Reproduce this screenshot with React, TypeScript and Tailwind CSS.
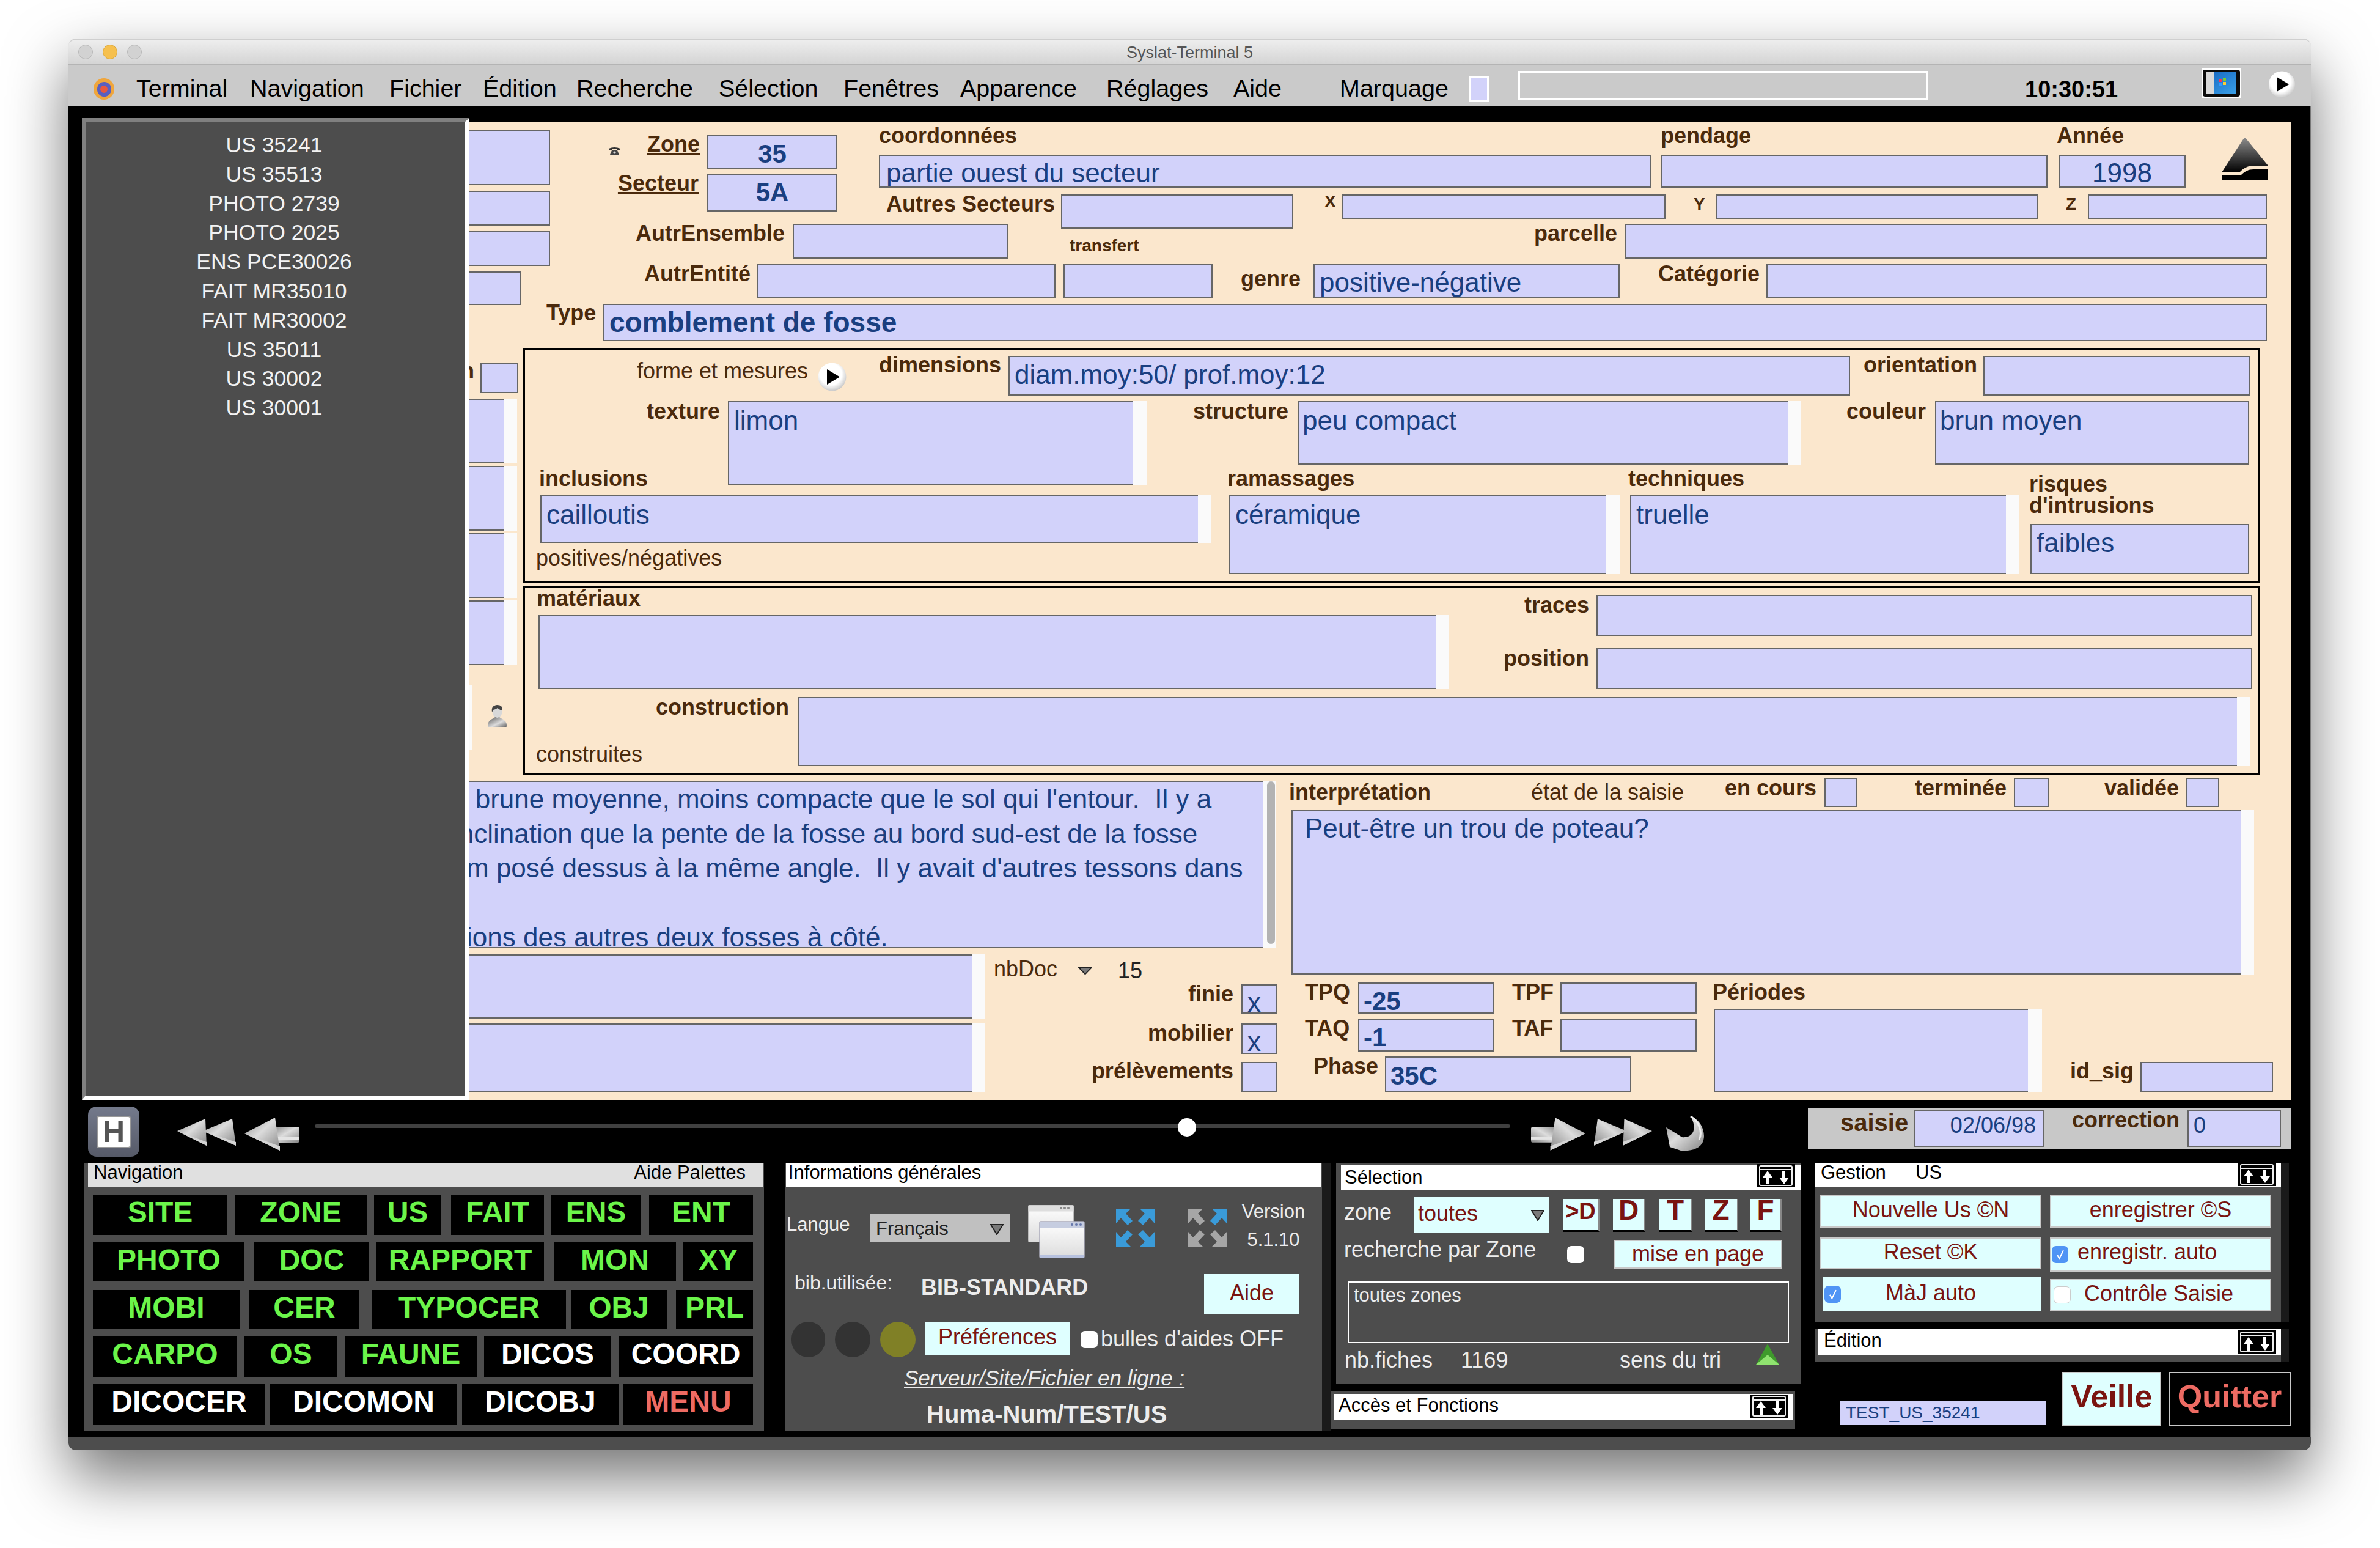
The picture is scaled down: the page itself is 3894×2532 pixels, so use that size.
import React from 'react';
import { twMerge } from 'tailwind-merge';

type Props = { className?: string; children?: React.ReactNode };

const Fld = ({ className, children }: Props) => (
  <div className={twMerge('shrink-0 overflow-hidden whitespace-pre border-2 border-[#666] bg-[#d2d2fa] pl-[8px] pt-[3px] text-[44px] leading-[50px] text-[#1a3f80]', className)}>
    {children}
  </div>
);

// field with the pale scroll track on its right
const Scroll = ({ className, field, track = 'w-[22px]', children }: Props & { field: string; track?: string }) => (
  <div className={twMerge('flex shrink-0', className)}>
    <Fld className={twMerge('h-full border-r-0 pt-[5px]', field)}>{children}</Fld>
    <div className={`${track} h-full shrink-0 bg-[#fafafa]`} />
  </div>
);

const Lbl = ({ className, children }: Props) => (
  <div className={twMerge('-mb-[2px] -mt-[6px] shrink-0 whitespace-nowrap pt-[2px] text-[36px] font-bold leading-[40px] text-[#4b2a0c]', className)}>{children}</div>
);

const Reg = ({ className, children }: Props) => (
  <div className={twMerge('-mb-[2px] shrink-0 whitespace-nowrap pt-[2px] text-[36px] leading-[40px] text-[#4b2a0c]', className)}>{children}</div>
);

const Play = ({ className }: Props) => (
  <svg viewBox="0 0 47 47" className={className}>
    <defs>
      <radialGradient id="pl" cx="0.45" cy="0.4" r="0.65">
        <stop offset="0.6" stopColor="#fff" />
        <stop offset="1" stopColor="#bdbdbd" />
      </radialGradient>
    </defs>
    <circle cx="23.5" cy="23.5" r="23" fill="url(#pl)" />
    <polygon points="15,11 36,23.5 15,36" fill="#000" />
  </svg>
);

const Eject = () => (
  <svg viewBox="0 0 76 70" className="-mt-[28px] ml-[59px] h-[70px] w-[76px] shrink-0">
    <defs>
      <linearGradient id="ej" x1="0" y1="0" x2="0" y2="1">
        <stop offset="0" stopColor="#8c8c8c" />
        <stop offset="1" stopColor="#000" />
      </linearGradient>
    </defs>
    <path d="M35 3 Q38 -2 41 3 L76 46 H52 C42 46 36 50 29 57 H0 Z" fill="url(#ej)" />
    <path d="M0 62 H31 C38 55 44 52 52 52 H76 V66 Q76 70 72 70 H4 Q0 70 0 66 Z" fill="#000" />
  </svg>
);

const Phone = () => (
  <svg viewBox="0 0 21 14" className="ml-[95px] mt-[26px] h-[14px] w-[21px] shrink-0">
    <path d="M1 3 Q10 -1 20 3 L19 6 H15 V4 H6 V6 H2 Z" fill="#333" />
    <path d="M6 6 H15 L18 13 H3 Z" fill="#444" />
    <circle cx="10.5" cy="9.5" r="2" fill="#ddd" />
  </svg>
);

const Person = () => (
  <svg viewBox="0 0 33 37" className="ml-[25px] mt-[33px] h-[37px] w-[33px] shrink-0">
    <defs>
      <linearGradient id="pb" x1="0" y1="0" x2="1" y2="1">
        <stop offset="0" stopColor="#555" />
        <stop offset="0.6" stopColor="#ddd" />
        <stop offset="1" stopColor="#666" />
      </linearGradient>
    </defs>
    <path d="M1 35 Q0 26 10 22 L13 20 H20 L23 22 Q33 26 32 35 Q32 36 31 36 H2 Q1 36 1 35 Z" fill="url(#pb)" />
    <ellipse cx="16.5" cy="11" rx="8" ry="10" fill="#d8d8d8" />
    <path d="M8 12 Q6 1 16 0 Q26 0 25 9 Q20 8 17 5 Q13 8 10 8 Z" fill="#444" />
  </svg>
);

const Tablet = () => (
  <svg viewBox="0 0 63 48" className="ml-[134px] mt-[5px] h-[48px] w-[63px] shrink-0">
    <rect width="63" height="48" fill="#fff" />
    <rect x="1" y="2" width="61" height="44" rx="4" fill="#0b0b0b" />
    <defs>
      <linearGradient id="sc" x1="0" y1="0" x2="1" y2="1">
        <stop offset="0" stopColor="#1565c0" />
        <stop offset="1" stopColor="#3aa0e8" />
      </linearGradient>
    </defs>
    <rect x="6" y="6" width="50" height="35" fill="url(#sc)" />
    <rect x="6" y="6" width="14" height="35" fill="#d9d9d9" />
    <rect x="28" y="17" width="5" height="5" fill="#f35" />
    <rect x="34" y="16" width="5" height="5" fill="#7c3" />
    <rect x="28" y="23" width="5" height="5" fill="#39f" />
    <rect x="34" y="22" width="5" height="5" fill="#fc3" />
  </svg>
);

const Tri = ({ className }: Props) => (
  <svg viewBox="0 0 22 20" preserveAspectRatio="none" className={className}>
    <polygon points="1,1 21,1 11,19" fill="#7a7a7a" stroke="#222" strokeWidth="2" />
  </svg>
);

const Left = ({ className, flip }: Props & { flip?: boolean }) => (
  <svg viewBox="0 0 90 54" className={className}>
    <defs>
      <linearGradient id="a1" x1="0" y1="0" x2="1" y2="1">
        <stop offset="0" stopColor="#8a8a8a" />
        <stop offset="0.45" stopColor="#dcdcdc" />
        <stop offset="1" stopColor="#858585" />
      </linearGradient>
    </defs>
    <g transform={flip ? 'translate(90,0) scale(-1,1)' : undefined}>
      <rect x="48" y="15" width="42" height="26" rx="3" fill="url(#a1)" />
      <rect x="48" y="32" width="42" height="4" fill="#e4e4e4" />
      <polygon points="0,26 50,0 58,54" fill="url(#a1)" />
      <polygon points="0,26 58,47 58,54" fill="#d4d4d4" />
    </g>
  </svg>
);

const DoubleLeft = ({ className, flip }: Props & { flip?: boolean }) => (
  <svg viewBox="0 0 96 44" className={className}>
    <g transform={flip ? 'translate(96,0) scale(-1,1)' : undefined}>
      <polygon points="0,20 46,0 48,44" fill="url(#a1)" />
      <polygon points="0,20 48,38 48,44" fill="#d4d4d4" />
      <polygon points="42,20 90,0 96,44" fill="url(#a1)" />
      <polygon points="42,20 96,38 96,44" fill="#d4d4d4" />
    </g>
  </svg>
);

const Back = ({ className }: Props) => (
  <svg viewBox="0 0 63 58" className={className}>
    <path d="M40 0 C58 6 66 28 60 42 C56 52 40 58 24 56 L6 50 L0 18 L26 34 C44 36 52 20 40 0 Z" fill="url(#a1)" />
    <path d="M40 0 C54 8 60 26 54 38" fill="none" stroke="#efefef" strokeWidth="3" />
  </svg>
);

const ArrowsOut = ({ colors, className }: Props & { colors: string[] }) => {
  const pts = '0,0 24,0 16,8 27,20 19,27 8,15 0,24';
  return (
    <svg viewBox="0 0 63 62" className={className}>
      <polygon points={pts} fill={colors[0]} />
      <polygon points={pts} fill={colors[1]} transform="translate(63,0) scale(-1,1)" />
      <polygon points={pts} fill={colors[2]} transform="translate(0,62) scale(1,-1)" />
      <polygon points={pts} fill={colors[3]} transform="translate(63,62) scale(-1,-1)" />
    </svg>
  );
};

const Windows = ({ className }: Props) => (
  <svg viewBox="0 0 93 88" className={className}>
    <defs>
      <linearGradient id="wb" x1="0" y1="0" x2="0" y2="1">
        <stop offset="0" stopColor="#fff" />
        <stop offset="1" stopColor="#dcdcdc" />
      </linearGradient>
    </defs>
    <rect x="0.5" y="0.5" width="74" height="60" rx="2" fill="url(#wb)" stroke="#bbb" />
    <rect x="0.5" y="0.5" width="74" height="10" fill="#dedede" />
    <circle cx="54" cy="5" r="2" fill="#888" /><circle cx="60" cy="5" r="2" fill="#888" /><circle cx="66" cy="5" r="2" fill="#888" />
    <rect x="19" y="27" width="73" height="59" rx="2" fill="url(#wb)" stroke="#aab" strokeWidth="1.5" />
    <rect x="19" y="27" width="73" height="11" fill="#c6cde0" />
    <circle cx="72" cy="32" r="2" fill="#67a" /><circle cx="79" cy="32" r="2" fill="#67a" /><circle cx="86" cy="32" r="2" fill="#67a" />
    <rect x="20" y="82" width="71" height="4" fill="#b7c1de" />
  </svg>
);

const Sort = () => (
  <svg viewBox="0 0 63 38" className="h-[38px] w-[63px] shrink-0">
    <rect width="63" height="38" fill="#000" />
    <rect x="5" y="3" width="53" height="32" rx="2" fill="#000" stroke="#eee" strokeWidth="2" />
    <rect x="5" y="8" width="53" height="2" fill="#eee" />
    <polygon points="18,11 26,22 21,22 21,33 16,33 16,22 10,22" fill="#fff" />
    <polygon points="45,33 37,22 42,22 42,11 47,11 47,22 53,22" fill="#fff" />
  </svg>
);

const Check = ({ className, on }: Props & { on?: boolean }) => (
  <div className={twMerge('flex shrink-0 items-center justify-center rounded-[7px]', on ? 'bg-[#4f94f5]' : 'border border-[#ccc] bg-white', className)}>
    {on && (
      <svg viewBox="0 0 24 24" className="h-[20px] w-[20px]">
        <path d="M6 13 L10 20 L18 4" fill="none" stroke="#fff" strokeWidth="2.5" />
      </svg>
    )}
  </div>
);

const navRows = [
  { row: 'mt-[12px]', items: [
    { t: 'SITE', c: 'w-[220px]' }, { t: 'ZONE', c: 'ml-[12px] w-[216px]' }, { t: 'US', c: 'ml-[12px] w-[110px]' },
    { t: 'FAIT', c: 'ml-[16px] w-[152px]' }, { t: 'ENS', c: 'ml-[12px] w-[146px]' }, { t: 'ENT', c: 'ml-[14px] w-[170px]' },
  ] },
  { row: 'mt-[12px] h-[64px]', items: [
    { t: 'PHOTO', c: 'w-[248px]' }, { t: 'DOC', c: 'ml-[16px] w-[188px]' }, { t: 'RAPPORT', c: 'ml-[12px] w-[274px]' },
    { t: 'MON', c: 'ml-[16px] w-[200px]' }, { t: 'XY', c: 'ml-[12px] w-[114px]' },
  ] },
  { row: 'mt-[14px] h-[64px]', items: [
    { t: 'MOBI', c: 'w-[240px]' }, { t: 'CER', c: 'ml-[16px] w-[180px]' }, { t: 'TYPOCER', c: 'ml-[20px] w-[318px]' },
    { t: 'OBJ', c: 'ml-[8px] w-[157px]' }, { t: 'PRL', c: 'ml-[15px] w-[126px]' },
  ] },
  { row: 'mt-[12px]', items: [
    { t: 'CARPO', c: 'w-[236px]' }, { t: 'OS', c: 'ml-[12px] w-[152px]' }, { t: 'FAUNE', c: 'ml-[12px] w-[216px]' },
    { t: 'DICOS', c: 'ml-[12px] w-[208px] text-white' }, { t: 'COORD', c: 'ml-[12px] w-[220px] text-white' },
  ] },
  { row: 'mt-[12px]', items: [
    { t: 'DICOCER', c: 'w-[282px] text-white' }, { t: 'DICOMON', c: 'ml-[8px] w-[306px] text-white' },
    { t: 'DICOBJ', c: 'ml-[8px] w-[256px] text-white' }, { t: 'MENU', c: 'ml-[8px] w-[212px] text-[#ee6b63]' },
  ] },
];

const menu = [
  { t: 'Terminal', c: 'w-[186px]' }, { t: 'Navigation', c: 'w-[228px]' }, { t: 'Fichier', c: 'w-[153px]' },
  { t: 'Édition', c: 'w-[153px]' }, { t: 'Recherche', c: 'w-[233px]' }, { t: 'Sélection', c: 'w-[204px]' },
  { t: 'Fenêtres', c: 'w-[191px]' }, { t: 'Apparence', c: 'w-[239px]' }, { t: 'Réglages', c: 'w-[208px]' },
  { t: 'Aide', c: 'w-[174px]' }, { t: 'Marquage', c: 'w-[211px]' },
];

const list = ['US 35241', 'US 35513', 'PHOTO 2739', 'PHOTO 2025', 'ENS PCE30026', 'FAIT MR35010', 'FAIT MR30002', 'US 35011', 'US 30002', 'US 30001'];

const Blue = ({ className, children }: Props) => (
  <div className={twMerge('shrink-0 border-2 border-[#c8c8c8] bg-[#dfffff] text-[36px] leading-[40px] text-[#7a1410]', className)}>{children}</div>
);

function TopForm() {
  return (
    <div className="flex h-[364px] shrink-0">
      <div className="flex w-[132px] shrink-0 flex-col gap-[9px] pt-[12px]">
        <Fld className="h-[91px] w-[132px] border-l-0" />
        <Fld className="h-[57px] w-[132px] border-l-0" />
        <Fld className="h-[57px] w-[132px] border-l-0" />
        <Fld className="h-[55px] w-[84px] border-l-0" />
      </div>
      <div className="flex w-[2809px] shrink-0 flex-col">
        <div className="flex h-[166px] shrink-0">
          <div className="w-[470px] shrink-0 pt-[14px]">
            <div className="flex items-start">
              <Phone />
              <Lbl className="mt-0 w-[129px] text-right underline">Zone</Lbl>
              <Fld className="ml-[12px] mt-[6px] h-[56px] w-[213px] pl-0 pt-[5px] text-center text-[42px] font-bold leading-[50px]">35</Fld>
            </div>
            <div className="mt-[2px] flex items-start">
              <Lbl className="mt-0 w-[243px] text-right underline">Secteur</Lbl>
              <Fld className="ml-[14px] mt-[7px] h-[61px] w-[213px] pl-0 pt-[3px] text-center text-[42px] font-bold leading-[50px]">5A</Fld>
            </div>
          </div>
          <div className="ml-[68px] w-[2271px] shrink-0">
            <div className="flex h-[53px] pt-[2px]">
              <Lbl className="mt-0 w-[1279px] pt-0">coordonnées</Lbl>
              <Lbl className="mt-0 w-[648px] pt-0">pendage</Lbl>
              <Lbl className="mt-0 pt-0">Année</Lbl>
            </div>
            <div className="flex h-[54px] items-start">
              <Fld className="h-[54px] w-[1264px] pl-[10px]">partie ouest du secteur</Fld>
              <Fld className="ml-[16px] h-[54px] w-[632px]" />
              <Fld className="ml-[18px] h-[54px] w-[208px] pl-0 text-center">1998</Fld>
              <Eject />
            </div>
            <div className="mt-[11px] flex items-start">
              <Lbl className="ml-[12px] w-[273px]">Autres Secteurs</Lbl>
              <Fld className="ml-[13px] h-[56px] w-[380px]" />
              <Lbl className="-mt-[4px] ml-[51px] w-[17px] pt-0 text-[28px] leading-[32px]">X</Lbl>
              <Fld className="ml-[12px] h-[40px] w-[529px]" />
              <Lbl className="ml-[46px] mt-0 w-[17px] pt-0 text-[28px] leading-[32px]">Y</Lbl>
              <Fld className="ml-[20px] h-[40px] w-[526px]" />
              <Lbl className="ml-[46px] mt-0 w-[17px] pt-0 text-[28px] leading-[32px]">Z</Lbl>
              <Fld className="ml-[19px] h-[40px] w-[293px]" />
            </div>
          </div>
        </div>
        <div className="flex h-[57px] shrink-0 items-start">
          <Lbl className="w-[384px] text-right">AutrEnsemble</Lbl>
          <Fld className="ml-[13px] h-[57px] w-[353px]" />
          <Lbl className="ml-[100px] mt-[20px] w-[113px] pt-0 text-[28px] leading-[32px]">transfert</Lbl>
          <Lbl className="w-[783px] text-right">parcelle</Lbl>
          <Fld className="ml-[13px] h-[57px] w-[1050px]" />
        </div>
        <div className="mt-[9px] flex h-[55px] shrink-0 items-start">
          <Lbl className="w-[328px] text-right">AutrEntité</Lbl>
          <Fld className="ml-[10px] h-[55px] w-[489px]" />
          <Fld className="ml-[13px] h-[55px] w-[244px]" />
          <Lbl className="mt-[2px] w-[144px] text-right">genre</Lbl>
          <Fld className="ml-[21px] h-[55px] w-[501px]">positive-négative</Fld>
          <Lbl className="ml-[63px] w-[164px]">Catégorie</Lbl>
          <Fld className="ml-[13px] h-[55px] w-[819px]" />
        </div>
        <div className="mt-[10px] flex h-[61px] shrink-0 items-start">
          <Lbl className="-ml-[6px] -mt-[7px] w-[81px]">Type</Lbl>
          <Fld className="ml-[12px] h-[61px] w-[2722px] pt-[3px] text-[46px] font-bold leading-[50px]">comblement de fosse</Fld>
        </div>
      </div>
    </div>
  );
}

function MidForm() {
  return (
    <div className="flex h-[708px] shrink-0">
      <div className="w-[88px] shrink-0 pt-[30px]">
        <div className="flex h-[49px] items-start">
          <div className="-mt-[7px] flex w-[8px] shrink-0 justify-end overflow-hidden text-[36px] font-bold leading-[40px] text-[#4b2a0c]">n</div>
          <Fld className="ml-[10px] h-[49px] w-[62px]" />
        </div>
        <div className="mt-[9px] flex flex-col gap-[4px]">
          <Scroll className="h-[106px]" field="w-[56px] border-l-0" />
          <Scroll className="h-[106px]" field="w-[56px] border-l-0" />
          <Scroll className="h-[106px]" field="w-[56px] border-l-0" />
          <Scroll className="h-[106px]" field="w-[56px] border-l-0" />
        </div>
        <div className="mt-[32px] flex items-start">
          <div className="h-[106px] w-[4px] shrink-0 bg-[#fafafa]" />
          <Person />
        </div>
      </div>
      <div className="flex flex-col pt-[6px]">
        {/* forme et mesures */}
        <div className="h-[383px] w-[2842px] shrink-0 border-[3px] border-black">
          <div className="mt-[9px] flex h-[65px] items-start">
            <Reg className="ml-[183px] mt-[3px] w-[280px]">forme et mesures</Reg>
            <Play className="ml-[16px] mt-[11px] h-[47px] w-[47px] shrink-0" />
            <Lbl className="-mt-[7px] ml-[53px] w-[199px]">dimensions</Lbl>
            <Fld className="ml-[13px] h-[65px] w-[1377px] pt-[4px]">diam.moy:50/ prof.moy:12</Fld>
            <Lbl className="-mt-[7px] ml-[22px] w-[184px]">orientation</Lbl>
            <Fld className="ml-[12px] h-[65px] w-[437px]" />
          </div>
          <div className="mt-[9px] flex h-[112px] items-start">
            <Lbl className="-mt-[5px] w-[319px] text-right">texture</Lbl>
            <Scroll className="ml-[13px] h-[137px]" field="w-[663px]">limon</Scroll>
            <Lbl className="-mt-[5px] w-[232px] text-right">structure</Lbl>
            <Scroll className="ml-[15px] h-[104px]" field="w-[802px] pl-[6px]">peu compact</Scroll>
            <Lbl className="-mt-[5px] w-[204px] text-right">couleur</Lbl>
            <Fld className="ml-[15px] h-[104px] w-[514px] pl-[6px] pt-[5px]">brun moyen</Fld>
          </div>
          <div className="flex items-start">
            <div className="ml-[25px] w-[1098px] shrink-0">
              <Lbl className="-ml-[2px] -mt-[7px]">inclusions</Lbl>
              <Scroll className="mt-[9px] h-[78px]" field="w-[1076px]">cailloutis</Scroll>
              <Reg className="-ml-[7px] mt-[3px]">positives/négatives</Reg>
            </div>
            <div className="ml-[29px] w-[639px] shrink-0">
              <Lbl className="-ml-[3px] -mt-[7px]">ramassages</Lbl>
              <Scroll className="mt-[9px] h-[129px]" field="w-[616px]" track="w-[23px]">céramique</Scroll>
            </div>
            <div className="ml-[17px] w-[636px] shrink-0">
              <Lbl className="-ml-[3px] -mt-[7px]">techniques</Lbl>
              <Scroll className="mt-[9px] h-[129px]" field="w-[615px]" track="w-[21px]">truelle</Scroll>
            </div>
            <div className="ml-[19px] w-[358px] shrink-0">
              <Lbl className="-ml-[2px] mb-0 mt-[6px] pt-0 leading-[35px]">risques<br />d'intrusions</Lbl>
              <Fld className="mt-[13px] h-[82px] w-[358px] pt-[4px]">faibles</Fld>
            </div>
          </div>
        </div>
        {/* matériaux */}
        <div className="mt-[6px] h-[308px] w-[2842px] shrink-0 border-[3px] border-black">
          <div className="flex h-[165px] items-start">
            <div className="w-[1512px] shrink-0 pl-[22px]">
              <Lbl className="-ml-[3px] -mt-[5px]">matériaux</Lbl>
              <Scroll className="mt-[9px] h-[121px]" field="w-[1468px]">{null}</Scroll>
            </div>
            <div className="pt-[11px]">
              <div className="flex items-start">
                <Lbl className="-mt-[5px] w-[229px] text-right">traces</Lbl>
                <Fld className="ml-[12px] h-[67px] w-[1073px]" />
              </div>
              <div className="mt-[20px] flex items-start">
                <Lbl className="-mt-[5px] w-[229px] text-right">position</Lbl>
                <Fld className="ml-[12px] h-[67px] w-[1073px]" />
              </div>
            </div>
          </div>
          <div className="mt-[13px] flex h-[113px] items-start">
            <div className="flex h-[113px] w-[446px] shrink-0 flex-col justify-between pb-[1px]">
              <Lbl className="-mt-[5px] pr-[14px] text-right">construction</Lbl>
              <Reg className="pl-[18px]">construites</Reg>
            </div>
            <Scroll className="h-[113px]" field="w-[2355px]" />
          </div>
        </div>
      </div>
    </div>
  );
}

function BottomForm() {
  return (
    <div className="flex h-[528px] shrink-0">
      <div className="w-[1325px] shrink-0 pt-[5px]">
        <div className="flex h-[274px]">
          <Fld className="h-full w-[1298px] border-l-0 border-r-0 pl-0 pt-0 leading-[56.5px]">
            <div className="-ml-[27px]">
              <div>e brune moyenne, moins compacte que le sol qui l'entour.  Il y a</div>
              <div>inclination que la pente de la fosse au bord sud-est de la fosse</div>
              <div>cm posé dessus à la même angle.  Il y avait d'autres tessons dans</div>
              <div>&nbsp;</div>
              <div>sions des autres deux fosses à côté.</div>
            </div>
          </Fld>
          <div className="h-full w-[21px] shrink-0 bg-[#fafafa] pl-[7px] pt-[1px]">
            <div className="h-[266px] w-[13px] rounded-full bg-[#b3b3b3]" />
          </div>
        </div>
        <div className="mt-[10px] flex h-[225px]">
          <div className="w-[844px] shrink-0">
            <Scroll className="h-[105px]" field="w-[822px] border-l-0" />
            <Scroll className="mt-[8px] h-[112px]" field="w-[822px] border-l-0" />
          </div>
          <div className="ml-[14px] w-[463px] shrink-0">
            <div className="flex h-[49px] items-start pt-[2px]">
              <Reg className="w-[105px]">nbDoc</Reg>
              <Tri className="ml-[33px] mt-[19px] h-[12px] w-[23px] shrink-0" />
              <Reg className="ml-[42px] mt-[3px] text-[#222]">15</Reg>
            </div>
            <div className="flex items-start justify-end">
              <Lbl>finie</Lbl>
              <Fld className="ml-[13px] h-[48px] w-[58px]">x</Fld>
            </div>
            <div className="mt-[16px] flex items-start justify-end">
              <Lbl>mobilier</Lbl>
              <Fld className="ml-[13px] h-[50px] w-[58px]">x</Fld>
            </div>
            <div className="mt-[13px] flex items-start justify-end">
              <Lbl className="-mt-[7px]">prélèvements</Lbl>
              <Fld className="ml-[13px] h-[49px] w-[58px]" />
            </div>
          </div>
        </div>
      </div>
      <div className="flex w-[1655px] shrink-0 flex-col">
        <div className="flex h-[48px] items-start">
          <Lbl className="ml-[16px] mt-[2px] w-[230px]">interprétation</Lbl>
          <Reg className="ml-[166px] mt-[2px] w-[248px]">état de la saisie</Reg>
          <Lbl className="-mt-[5px] ml-[69px] w-[149px]">en cours</Lbl>
          <Fld className="ml-[14px] h-[48px] w-[54px]" />
          <Lbl className="-mt-[5px] ml-[94px] w-[149px]">terminée</Lbl>
          <Fld className="ml-[13px] h-[48px] w-[57px]" />
          <Lbl className="-mt-[5px] ml-[91px] w-[122px]">validée</Lbl>
          <Fld className="ml-[12px] h-[48px] w-[54px]" />
        </div>
        <Scroll className="ml-[20px] mt-[5px] h-[269px]" field="w-[1553px] pl-[20px] pt-[3px]">Peut-être un trou de poteau?</Scroll>
        <div className="mt-[13px] flex h-[179px] items-start">
          <div className="ml-[42px] w-[641px] shrink-0">
            <div className="flex items-start">
              <Lbl className="w-[75px]">TPQ</Lbl>
              <Fld className="ml-[12px] h-[51px] w-[223px] pl-[7px] pt-[4px] text-[42px] font-bold leading-[50px]">-25</Fld>
              <Lbl className="ml-[29px] w-[68px]">TPF</Lbl>
              <Fld className="ml-[11px] h-[51px] w-[223px]" />
            </div>
            <div className="mt-[8px] flex items-start">
              <Lbl className="w-[75px]">TAQ</Lbl>
              <Fld className="ml-[12px] h-[54px] w-[223px] pl-[7px] pt-[4px] text-[42px] font-bold leading-[50px]">-1</Fld>
              <Lbl className="ml-[29px] w-[68px]">TAF</Lbl>
              <Fld className="ml-[11px] h-[54px] w-[223px]" />
            </div>
            <div className="mt-[8px] flex items-start">
              <Lbl className="ml-[14px] w-[106px]">Phase</Lbl>
              <Fld className="ml-[11px] h-[58px] w-[403px] pl-[7px] pt-[5px] text-[42px] font-bold leading-[50px]">35C</Fld>
            </div>
          </div>
          <div className="ml-[26px] w-[539px] shrink-0">
            <Lbl>Périodes</Lbl>
            <Scroll className="ml-[2px] mt-[9px] h-[136px]" field="w-[514px]" track="w-[23px]" />
          </div>
          <div className="ml-[46px] mt-[130px] flex items-start">
            <Lbl className="-mt-[7px] w-[102px]">id_sig</Lbl>
            <Fld className="ml-[13px] h-[49px] w-[217px]" />
          </div>
        </div>
      </div>
    </div>
  );
}

function Toolbar() {
  return (
    <div className="flex h-[102px] shrink-0 items-start pl-[32px]">
      <div className="mt-[10px] flex h-[82px] w-[84px] shrink-0 items-center justify-center rounded-[14px] bg-gradient-to-b from-[#747a8c] to-[#565a68]">
        <div className="flex h-[53px] w-[56px] items-center justify-center rounded-[4px] border-2 border-[#999] bg-white text-[50px] font-bold leading-none text-[#555]">H</div>
      </div>
      <DoubleLeft className="ml-[62px] mt-[30px] h-[44px] w-[96px] shrink-0" />
      <Left className="ml-[14px] mt-[28px] h-[54px] w-[90px] shrink-0" />
      <div className="relative ml-[25px] mt-[39px] h-[6px] w-[1956px] shrink-0 rounded-full bg-[#404040]">
        <div className="absolute -top-[10px] left-[1412px] h-[30px] w-[30px] rounded-full bg-white" />
      </div>
      <Left flip className="ml-[34px] mt-[28px] h-[54px] w-[89px] shrink-0" />
      <DoubleLeft flip className="ml-[14px] mt-[30px] h-[44px] w-[95px] shrink-0" />
      <Back className="ml-[23px] mt-[26px] h-[58px] w-[63px] shrink-0" />
      <div className="ml-[169px] mt-[12px] flex h-[68px] w-[791px] shrink-0 items-start bg-[#c8c8c8]">
        <Lbl className="ml-[53px] mt-[2px] w-[109px] text-[40px] leading-[40px]">saisie</Lbl>
        <Fld className="ml-[12px] mt-[4px] h-[60px] w-[213px] pl-0 pr-[12px] pt-[3px] text-right text-[36px] leading-[40px]">02/06/98</Fld>
        <Lbl className="-mt-[2px] ml-[45px] w-[176px]">correction</Lbl>
        <Fld className="ml-[13px] mt-[4px] h-[60px] w-[153px] pl-[8px] pt-[3px] text-[36px] leading-[40px]">0</Fld>
      </div>
    </div>
  );
}

function NavPanel() {
  return (
    <div className="ml-[26px] h-[438px] w-[1112px] shrink-0 bg-[#4d4d4d]">
      <div className="ml-[6px] flex h-[40px] w-[1104px] justify-between bg-[#e0e0e0] pl-[9px] pr-[28px] text-[31px] leading-[32px] text-black">
        <span>Navigation</span>
        <span>Aide Palettes</span>
      </div>
      <div className="ml-[14px]">
        {navRows.map((r) => (
          <div key={r.items[0].t} className={twMerge('flex h-[66px]', r.row)}>
            {r.items.map((b) => (
              <div key={b.t} className={twMerge('h-full bg-black text-center text-[48px] font-bold leading-[58px] text-[#6bf54a]', b.c)}>{b.t}</div>
            ))}
          </div>
        ))}
      </div>
    </div>
  );
}

function InfoPanel() {
  const pale = 'shrink-0 whitespace-nowrap text-[#ececec]';
  return (
    <>
      <div className="ml-[34px] h-[438px] w-[879px] shrink-0 bg-[#4d4d4d]">
        <div className="ml-[2px] h-[40px] w-[876px] bg-white pl-[4px] text-[31px] leading-[32px] text-black">Informations générales</div>
        <div className="mt-[29px] flex h-[88px] items-start">
          <div className={`${pale} ml-[3px] mt-[12px] w-[137px] text-[31px] leading-[40px]`}>Langue</div>
          <div className="mt-[15px] flex h-[46px] w-[228px] shrink-0 justify-between bg-[#c0c0c0] pl-[9px] pr-[10px] text-[31px] leading-[48px] text-[#222]">
            <span>Français</span>
            <Tri className="mt-[16px] h-[18px] w-[22px]" />
          </div>
          <Windows className="ml-[30px] h-[88px] w-[93px] shrink-0" />
          <ArrowsOut colors={['#3a9bd9', '#3a9bd9', '#3a9bd9', '#3a9bd9']} className="ml-[51px] mt-[6px] h-[62px] w-[63px] shrink-0" />
          <ArrowsOut colors={['#a6a6a6', '#3a9bd9', '#a6a6a6', '#a6a6a6']} className="ml-[55px] mt-[6px] h-[62px] w-[63px] shrink-0" />
          <div className={`${pale} -mt-[12px] ml-[24px] w-[105px] text-center text-[31px] leading-[46px]`}>Version<br />5.1.10</div>
        </div>
        <div className="mt-[25px] flex h-[66px] items-start">
          <div className={`${pale} -mt-[6px] ml-[16px] w-[207px] text-[32px] leading-[40px]`}>bib.utilisée:</div>
          <div className={`${pale} w-[463px] text-[36px] font-bold leading-[44px]`}>BIB-STANDARD</div>
          <Blue className="h-[66px] w-[156px] border-0 pt-[11px] text-center">Aide</Blue>
        </div>
        <div className="mt-[12px] flex h-[58px] items-start">
          <div className="ml-[11px] h-[58px] w-[55px] shrink-0 rounded-full bg-[#333]" />
          <div className="ml-[16px] h-[58px] w-[58px] shrink-0 rounded-full bg-[#333]" />
          <div className="ml-[16px] h-[58px] w-[58px] shrink-0 rounded-full bg-[#808026]" />
          <Blue className="ml-[16px] h-[54px] w-[236px] border-0 pt-[5px] text-center">Préférences</Blue>
          <Check className="ml-[18px] mt-[15px] h-[28px] w-[28px] border-0" />
          <div className={`${pale} ml-[5px] mt-[8px] text-[36px] leading-[40px]`}>bulles d'aides OFF</div>
        </div>
        <div className={`${pale} ml-[195px] mt-[14px] text-[35px] italic leading-[40px] underline`}>Serveur/Site/Fichier en ligne :</div>
        <div className={`${pale} ml-[232px] mt-[17px] text-[40px] font-bold leading-[44px]`}>Huma-Num/TEST/US</div>
      </div>
      <div className="h-[438px] w-[15px] shrink-0 bg-[#1a1a1a]" />
    </>
  );
}

function SelectionPanel() {
  const pale = 'shrink-0 whitespace-nowrap text-[36px] leading-[40px] text-[#ececec]';
  const letter = 'h-[54px] shrink-0 border-b-[3px] border-r-2 border-b-black border-r-[#888] bg-[#dfffff] text-center font-bold text-[#7a1410]';
  return (
    <div className="w-[768px] shrink-0">
      <div className="ml-[8px] h-[362px] w-[760px] bg-[#4d4d4d] pt-[4px]">
        <div className="ml-[8px] flex h-[40px] w-[752px] justify-between bg-white pl-[6px] pr-[9px] text-[31px] leading-[32px] text-black">
          <span className="mt-[4px]">Sélection</span>
          <div className="-mt-[2px]"><Sort /></div>
        </div>
        <div className="mt-[12px] flex h-[58px] items-start">
          <div className={`${pale} ml-[13px] mt-[5px] w-[115px]`}>zone</div>
          <div className="flex h-[58px] w-[220px] shrink-0 justify-between bg-[#dfffff] pl-[6px] pr-[7px] pt-[7px] text-[36px] leading-[40px] text-[#7a1410]">
            <span>toutes</span>
            <Tri className="mt-[14px] h-[18px] w-[22px]" />
          </div>
          <div className={`${letter} ml-[23px] mt-[3px] w-[60px] text-[38px] leading-[41px]`}>&gt;D</div>
          <div className={`${letter} ml-[22px] mt-[3px] w-[53px] text-[46px] leading-[36px]`}>D</div>
          <div className={`${letter} ml-[23px] mt-[3px] w-[54px] text-[46px] leading-[36px]`}>T</div>
          <div className={`${letter} ml-[20px] mt-[3px] w-[55px] text-[46px] leading-[36px]`}>Z</div>
          <div className={`${letter} ml-[20px] mt-[3px] w-[51px] text-[46px] leading-[36px]`}>F</div>
        </div>
        <div className="mt-[12px] flex h-[48px] items-start">
          <div className={`${pale} -mt-[4px] ml-[13px] w-[365px]`}>recherche par Zone</div>
          <Check className="mt-[10px] h-[28px] w-[28px] border-0" />
          <Blue className="ml-[48px] h-[48px] w-[276px] border-b-[3px] pt-[1px] text-center">mise en page</Blue>
        </div>
        <div className="ml-[19px] mt-[20px] h-[101px] w-[722px] border-2 border-white pl-[8px] pt-[3px] text-[31px] leading-[36px] text-[#ececec]">toutes zones</div>
        <div className="mt-[8px] flex items-start">
          <div className={`${pale} ml-[14px] w-[190px]`}>nb.fiches</div>
          <div className={`${pale} w-[260px] text-[34px]`}>1169</div>
          <div className={`${pale} w-[223px]`}>sens du tri</div>
          <svg viewBox="0 0 38 34" className="-mt-[7px] h-[34px] w-[38px] shrink-0">
            <polygon points="19,0 38,34 0,34" fill="#3f9a2c" />
            <polygon points="19,18 38,34 0,34" fill="#8fe36f" />
          </svg>
        </div>
      </div>
      <div className="mt-[12px] h-[62px] w-[759px] bg-[#4d4d4d] pt-[4px]">
        <div className="ml-[4px] flex h-[42px] w-[752px] justify-between bg-white pl-[8px] pr-[8px] text-[31px] leading-[32px] text-black">
          <span className="mt-[3px]">Accès et Fonctions</span>
          <div className="mt-[1px]"><Sort /></div>
        </div>
      </div>
    </div>
  );
}

function GestionPanel() {
  return (
    <div className="ml-[24px] w-[775px] shrink-0">
      <div className="flex h-[260px]">
        <div className="h-full w-[762px] shrink-0 bg-[#4d4d4d]">
          <div className="flex h-[40px] bg-white pl-[9px] pr-[8px] text-[31px] leading-[32px] text-black">
            <span className="w-[155px] shrink-0">Gestion</span>
            <span className="flex-1">US</span>
            <Sort />
          </div>
          <div className="mt-[12px] flex items-start">
            <Blue className="ml-[8px] h-[54px] w-[362px] pt-[3px] text-center">Nouvelle Us ©N</Blue>
            <Blue className="ml-[14px] h-[54px] w-[362px] pt-[3px] text-center">enregistrer ©S</Blue>
          </div>
          <div className="mt-[16px] flex items-start">
            <Blue className="ml-[8px] h-[52px] w-[362px] pt-[2px] text-center">Reset ©K</Blue>
            <Blue className="ml-[14px] flex h-[56px] w-[362px] items-start pt-[2px]">
              <Check on className="ml-[1px] mt-[10px] h-[28px] w-[27px]" />
              <span className="ml-[15px]">enregistr. auto</span>
            </Blue>
          </div>
          <div className="mt-[8px] flex items-start">
            <Blue className="ml-[13px] flex h-[57px] w-[357px] items-start border-0 pt-[7px]">
              <Check on className="ml-[2px] mt-[8px] h-[28px] w-[27px]" />
              <span className="ml-[73px]">MàJ auto</span>
            </Blue>
            <Blue className="ml-[14px] mt-[4px] flex h-[53px] w-[362px] items-start pt-[2px]">
              <Check className="ml-[4px] mt-[8px] h-[28px] w-[28px]" />
              <span className="ml-[22px]">Contrôle Saisie</span>
            </Blue>
          </div>
        </div>
        <div className="h-full w-[13px] shrink-0 bg-[#1a1a1a]" />
      </div>
      <div className="mt-[12px] flex h-[54px]">
        <div className="h-full w-[762px] shrink-0 bg-[#4d4d4d]">
          <div className="ml-[4px] flex h-[42px] w-[758px] justify-between bg-white pl-[10px] pr-[8px] text-[31px] leading-[32px] text-black">
            <span className="mt-[3px]">Édition</span>
            <div className="mt-[2px]"><Sort /></div>
          </div>
        </div>
        <div className="h-full w-[13px] shrink-0 bg-[#1a1a1a]" />
      </div>
      <div className="flex items-start">
        <div className="ml-[40px] mt-[64px] h-[38px] w-[338px] shrink-0 bg-[#d2d2fa] pl-[10px] text-[28px] leading-[38px] text-[#1a3f80]">TEST_US_35241</div>
        <Blue className="ml-[26px] mt-[16px] h-[89px] w-[162px] pt-[9px] text-center text-[52px] font-bold leading-[58px]">Veille</Blue>
        <div className="ml-[12px] mt-[16px] h-[89px] w-[200px] shrink-0 border-2 border-[#c8c8c8] bg-black pt-[9px] text-center text-[52px] font-bold leading-[58px] text-[#ee6b63]">Quitter</div>
      </div>
    </div>
  );
}

export default function App() {
  return (
    <div className="h-[2532px] w-[3894px] overflow-hidden bg-white pl-[112px] pt-[63px] font-['Liberation_Sans',Arial,sans-serif]">
      <div className="flex h-[2309px] w-[3669px] flex-col rounded-[12px] shadow-[0_44px_100px_rgba(0,0,0,0.55)]">
        {/* title bar */}
        <div className="flex h-[44px] shrink-0 items-center rounded-t-[12px] border-b-2 border-t-2 border-b-[#b4b4b4] border-t-[#cfcfcf] bg-gradient-to-b from-[#eeeeee] to-[#d4d4d4] pl-[16px]">
          <div className="flex gap-[16px]">
            <div className="h-[24px] w-[24px] rounded-full border border-[#b8b8b8] bg-[#d2d2d2]" />
            <div className="h-[24px] w-[24px] rounded-full border border-[#d9a63a] bg-[#f6c04e]" />
            <div className="h-[24px] w-[24px] rounded-full border border-[#b8b8b8] bg-[#d2d2d2]" />
          </div>
          <div className="flex-1 pr-[120px] pt-[2px] text-center text-[27px] text-[#555]">Syslat-Terminal 5</div>
        </div>
        {/* menu bar */}
        <div className="flex h-[67px] shrink-0 items-start bg-[#cacaca]">
          <div className="ml-[41px] mt-[21px] flex h-[35px] w-[34px] shrink-0 items-center justify-center rounded-full bg-[#f0a63c]">
            <div className="flex h-[24px] w-[23px] items-center justify-center rounded-full bg-[#5a5fc0]">
              <div className="h-[12px] w-[12px] rounded-full bg-[#e8583f]" />
            </div>
          </div>
          <div className="ml-[36px] mt-[15px] flex">
            {menu.map((m) => (
              <div key={m.t} className={twMerge('shrink-0 whitespace-nowrap text-[39.5px] leading-[44px] text-black', m.c)}>{m.t}</div>
            ))}
          </div>
          <div className="mt-[17px] h-[43px] w-[33px] shrink-0 border-[3px] border-white bg-[#d2d2fa]" />
          <div className="ml-[48px] mt-[9px] h-[48px] w-[670px] shrink-0 border-[3px] border-white" />
          <div className="ml-[159px] mt-[17px] w-[156px] shrink-0 text-[38px] font-bold leading-[44px] text-black">10:30:51</div>
          <Tablet />
          <Play className="ml-[45px] mt-[9px] h-[44px] w-[45px] shrink-0" />
        </div>
        {/* body */}
        <div className="flex h-[2176px] shrink-0 flex-col border-r-2 border-r-[#777] bg-black">
          <div className="flex h-[1626px] shrink-0 items-start">
            <div className="ml-[22px] mt-[19px] h-[1606px] w-[634px] shrink-0 border-b-[7px] border-l-[6px] border-r-[8px] border-t-[7px] border-b-white border-l-[#808080] border-r-white border-t-[#808080] bg-[#4d4d4d] pr-[3px] pt-[14px] text-center text-[35.5px] leading-[47.8px] text-[#f2f2f2]">
              {list.map((l) => <div key={l}>{l}</div>)}
            </div>
            <div className="mt-[26px] flex h-[1600px] w-[2980px] shrink-0 flex-col overflow-hidden bg-[#fbe7cd]">
              <TopForm />
              <MidForm />
              <BottomForm />
            </div>
          </div>
          <Toolbar />
          <div className="flex h-[438px] shrink-0 items-start">
            <NavPanel />
            <InfoPanel />
            <SelectionPanel />
            <GestionPanel />
          </div>
        </div>
        <div className="h-[22px] shrink-0 rounded-b-[12px] bg-[#4d4d4d]" />
      </div>
    </div>
  );
}
